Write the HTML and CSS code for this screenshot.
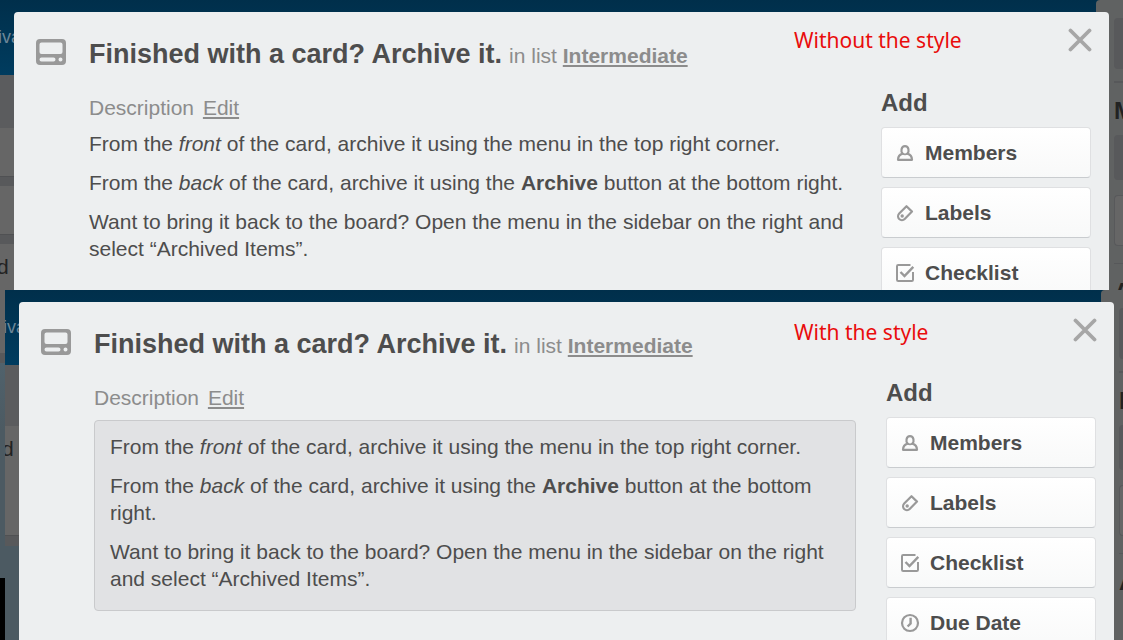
FILE: index.html
```html
<!DOCTYPE html>
<html lang="en">
<head>
<meta charset="utf-8">
<title>Finished with a card? Archive it.</title>
<link rel="stylesheet" href="styles.css">
</head>
<body>
<svg class="sprite" aria-hidden="true">
  <symbol id="card" viewBox="0 0 30 26">
    <path fill="currentColor" fill-rule="evenodd" d="M4 0H26Q30 0 30 4V22Q30 26 26 26H4Q0 26 0 22V4Q0 0 4 0ZM5.500 3.500Q3.500 3.500 3.500 5.500V13Q3.500 15 5.500 15H24.500Q26.500 15 26.500 13V5.500Q26.500 3.500 24.500 3.500ZM5.500 18.500A1.900 1.900 0 0 0 5.500 22.500H17.500A1.900 1.900 0 0 0 17.500 18.500ZM24.500 18.500A2 2 0 1 0 24.500 22.500A2 2 0 0 0 24.500 18.500Z"/>
  </symbol>
  <symbol id="close" viewBox="0 0 24 24">
    <path fill="none" stroke="currentColor" stroke-width="3.800" stroke-linecap="round" d="M2.500 2.500L21.500 21.500M21.500 2.500L2.500 21.500"/>
  </symbol>
  <symbol id="member" viewBox="0 0 20 20">
    <path fill="none" stroke="currentColor" stroke-width="2.200" stroke-linejoin="round" d="M7.600 10.600C5.600 8.800 6 3.200 10 3.200S14.400 8.800 12.400 10.600C15.500 11.300 16.900 13.300 17 16.800H3C3.100 13.300 4.500 11.300 7.600 10.600Z"/>
    <path fill="none" stroke="currentColor" stroke-width="1.800" d="M7.300 10.600Q10 12.300 12.700 10.600"/>
  </symbol>
  <symbol id="label" viewBox="0 0 20 20">
    <path fill="none" stroke="currentColor" stroke-width="2.200" stroke-linejoin="round" d="M11.500 3.200L17 8.600L9.700 16C8.200 17.500 5.700 17.400 4.200 16C2.700 14.500 2.700 12.100 4.200 10.500Z"/>
    <circle cx="7.200" cy="13" r="1.700" fill="currentColor"/>
  </symbol>
  <symbol id="check" viewBox="0 0 20 20">
    <path fill="none" stroke="currentColor" stroke-width="2" stroke-linejoin="round" d="M15.500 2H3.200Q2 2 2 3.200V16.800Q2 18 3.200 18H16.800Q18 18 18 16.800V9"/>
    <path fill="none" stroke="currentColor" stroke-width="2.400" d="M5.500 9L9.500 13L18.300 3.800"/>
  </symbol>
  <symbol id="clock" viewBox="0 0 20 20">
    <circle cx="10" cy="10" r="8" fill="none" stroke="currentColor" stroke-width="2.200"/>
    <path fill="none" stroke="currentColor" stroke-width="2.400" d="M10.600 4.800V10.500L7.600 13.500"/>
  </symbol>
</svg>

<section class="shot shot-plain">
  <div class="board" aria-hidden="true">
    <div class="board-bar">iva</div>
    <div class="board-list">
      <div class="list-head"></div>
      <div class="list-card"></div>
      <div class="list-card"></div>
      <div class="list-card tall">d</div>
    </div>
    <div class="board-menu">
      <div class="menu-button"></div>
      <div class="menu-title">M</div>
      <div class="menu-button short"></div>
      <div class="menu-card"></div>
      <div class="menu-title low">A</div>
    </div>
  </div>
  <article class="dialog">
    <header class="dialog-head">
      <svg class="card-icon"><use href="#card"/></svg>
      <h2 class="title">Finished with a card? Archive it.</h2>
      <p class="in-list">in list <a href="#list">Intermediate</a></p>
      <button class="close" aria-label="Close"><svg><use href="#close"/></svg></button>
    </header>
    <div class="dialog-body">
      <div class="main">
        <p class="label-row">Description <a href="#edit">Edit</a></p>
        <div class="description">
          <p>From the <em>front</em> of the card, archive it using the menu in the top right corner.</p>
          <p>From the <em>back</em> of the card, archive it using the <strong>Archive</strong> button at the bottom right.</p>
          <p>Want to bring it back to the board? Open the menu in the sidebar on the right and select “Archived Items”.</p>
        </div>
      </div>
      <aside class="side">
        <h3 class="side-title">Add</h3>
        <button class="action"><svg><use href="#member"/></svg>Members</button>
        <button class="action"><svg><use href="#label"/></svg>Labels</button>
        <button class="action"><svg><use href="#check"/></svg>Checklist</button>
      </aside>
    </div>
  </article>
  <p class="note">Without the style</p>
</section>

<section class="shot shot-styled">
  <div class="board" aria-hidden="true">
    <div class="board-bar">iva</div>
    <div class="board-list">
      <div class="list-head"></div>
      <div class="list-card tall">d</div>
    </div>
    <div class="board-menu">
      <div class="menu-button"></div>
      <div class="menu-title">M</div>
      <div class="menu-button short"></div>
      <div class="menu-card"></div>
      <div class="menu-title low">A</div>
    </div>
  </div>
  <article class="dialog">
    <header class="dialog-head">
      <svg class="card-icon"><use href="#card"/></svg>
      <h2 class="title">Finished with a card? Archive it.</h2>
      <p class="in-list">in list <a href="#list">Intermediate</a></p>
      <button class="close" aria-label="Close"><svg><use href="#close"/></svg></button>
    </header>
    <div class="dialog-body">
      <div class="main">
        <p class="label-row">Description <a href="#edit">Edit</a></p>
        <div class="description boxed">
          <p>From the <em>front</em> of the card, archive it using the menu in the top right corner.</p>
          <p>From the <em>back</em> of the card, archive it using the <strong>Archive</strong> button at the bottom right.</p>
          <p>Want to bring it back to the board? Open the menu in the sidebar on the right and select “Archived Items”.</p>
        </div>
      </div>
      <aside class="side">
        <h3 class="side-title">Add</h3>
        <button class="action"><svg><use href="#member"/></svg>Members</button>
        <button class="action"><svg><use href="#label"/></svg>Labels</button>
        <button class="action"><svg><use href="#check"/></svg>Checklist</button>
        <button class="action"><svg><use href="#clock"/></svg>Due Date</button>
      </aside>
    </div>
  </article>
  <p class="note">With the style</p>
</section>
<div class="edge" aria-hidden="true"></div>
</body>
</html>
```
FILE: styles.css
```css
* { box-sizing: border-box; }

body {
  margin: 0;
  height: 100vh;
  display: grid;
  grid-template-rows: 290px 1fr;
  overflow: hidden;
  position: relative;
  background: #4c5a62;
  color: #4d4d4d;
  font: 21px/27px "Liberation Sans", Arial, sans-serif;
}

h2, h3, p { margin: 0; }

.sprite { position: absolute; width: 0; height: 0; }

.shot {
  position: relative;
  min-height: 0;
  overflow: hidden;
  padding: 12px 14px 0;
  background: #4c5a62;
}

.shot-styled { margin: 0 -5px 0 5px; }

/* Dimmed board behind the dialog */
.board {
  position: absolute;
  inset: 0;
  overflow: hidden;
  color: #222;
}

.board-bar {
  height: 75px;
  padding-top: 24px;
  background: linear-gradient(#002f4b, #003c5f);
  color: #6d8798;
  font-size: 18px;
  text-indent: -2px;
}

.board-list {
  width: 200px;
  padding-bottom: 10px;
  background: #58595b;
}

.list-head { height: 53px; background: #5b5c5e; }

.list-card {
  height: 49px;
  margin-bottom: 9px;
  border-bottom: 1px solid #505153;
  background: #666;
  text-indent: -3px;
}

.list-card.tall { height: 110px; margin-bottom: 0; padding-top: 9px; }

.shot-styled .list-head { height: 61px; }

.board-menu {
  position: absolute;
  inset: 0 0 0 auto;
  width: 27px;
  padding: 18px 0 0 18px;
  overflow: hidden;
  border-radius: 4px 0 0 0;
  background: #606262;
}

.menu-button {
  height: 51px;
  border-radius: 4px 0 0 4px;
  background: #58595b;
}

.menu-button.short { height: 45px; }

.menu-title {
  margin: 12px 0 11px;
  padding-top: 14px;
  border-top: 2px solid #57585a;
  font-size: 24px;
  font-weight: bold;
}

.menu-card {
  height: 51px;
  margin-top: 15px;
  border: 1px solid #58595b;
  border-right: 0;
  border-radius: 4px 0 0 4px;
  background: #666;
}

.menu-title.low { margin-top: 17px; border-width: 1px; }

/* Card dialog */
.dialog {
  position: relative;
  min-height: 100%;
  padding: 24px 18px 0 22px;
  border-radius: 4px 4px 0 0;
  background: #edeff0;
}

.dialog-head {
  display: flex;
  align-items: baseline;
  height: 36px;
  line-height: 36px;
}

.card-icon {
  align-self: center;
  flex: none;
  width: 30px;
  height: 26px;
  margin: 0 23px 4px 0;
  color: #999;
}

.title { font-size: 27px; line-height: 36px; }

.in-list { margin-left: 7px; color: #8c8c8c; }

.in-list a { font-weight: bold; }

a { color: #8c8c8c; text-underline-offset: 2px; text-decoration-thickness: 2px; }

.close {
  align-self: flex-start;
  margin: -8px -1px 0 auto;
  padding: 0;
  border: 0;
  background: none;
  color: #a6a6a6;
  line-height: 0;
}

.close svg { width: 24px; height: 24px; }

.dialog-body {
  display: grid;
  grid-template-columns: 1fr 210px;
  gap: 30px;
  margin-top: 17px;
  padding-left: 53px;
}

.label-row { padding-top: 5px; color: #8c8c8c; }

.label-row a { margin-left: 3px; }

.description {
  display: grid;
  gap: 12px;
  margin-top: 9px;
}

.boxed {
  padding: 12px 15px 18px;
  border: 1px solid #c9cacc;
  border-radius: 4px;
  background: #e1e2e4;
}

.side {
  display: grid;
  gap: 9px;
  align-content: start;
}

.side-title { padding-bottom: 2px; font-size: 24px; line-height: 27px; }

.action {
  display: flex;
  align-items: center;
  gap: 10px;
  height: 51px;
  padding: 0 13px;
  border: 1px solid #dfe0e2;
  border-bottom-color: #c9cccf;
  border-radius: 4px;
  background: linear-gradient(#fff, #f8f9f9);
  color: #4d4d4d;
  font: bold 21px/27px "Liberation Sans", Arial, sans-serif;
}

.action svg { width: 20px; height: 20px; color: #999; }

/* Captions laid over each dialog */
.note {
  position: absolute;
  left: 794px;
  top: 27px;
  color: #e90c0c;
  font: 21px/27px "Noto Sans", "Open Sans", sans-serif;
}

.shot-styled .note { left: 789px; top: 29px; }

/* Strip of the first board left of the second one */
.edge {
  position: absolute;
  left: 0;
  top: 290px;
  bottom: 0;
  width: 5px;
  background: linear-gradient(#666 63px, #58595b 63px 73px, #50626c 73px, #4c5a62 140px 288px, #000 288px);
}
```
